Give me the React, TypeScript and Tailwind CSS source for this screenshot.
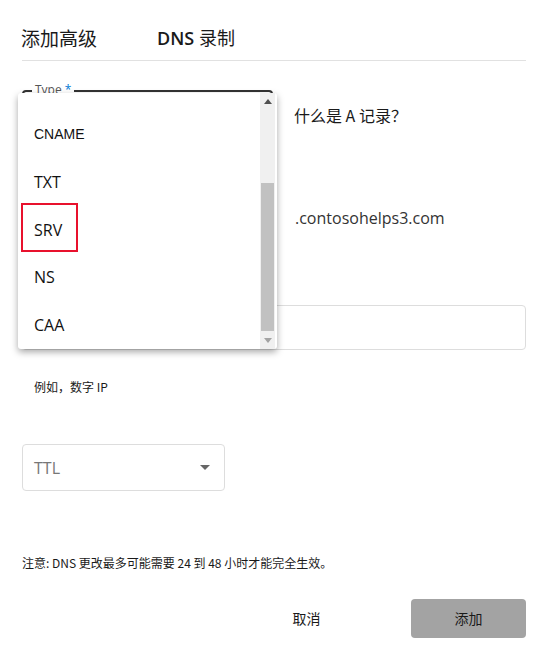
const items = ["CNAME", "TXT", "SRV", "NS", "CAA"];

const Arrow = ({ up, color }: { up?: boolean; color: string }) => (
  <svg width="8" height="5" viewBox="0 0 8 5">
    <path d={up ? "M0 5 L4 0 L8 5 Z" : "M0 0 L4 5 L8 0 Z"} fill={color} />
  </svg>
);

const TypeMenu = () => (
  <div className="absolute left-[18px] top-[93px] w-[259px] h-[256px] bg-white rounded-[3px] shadow-[0_3px_7px_rgba(0,0,0,0.35)] flex z-10">
    <div className="flex-1 pt-[18px]">
      {items.map((item) => (
        <div key={item} className="relative h-[47.5px] flex items-center pl-[16px]">
          <span
            className={
              item === "CNAME"
                ? "text-[14px] text-[#111] font-['Liberation_Sans',sans-serif]"
                : "text-[16px] text-[#111]"
            }
          >
            {item}
          </span>
          {item === "SRV" && (
            <span className="absolute left-[3px] top-[-3px] w-[57px] h-[49px] border-2 border-[#e8112d]" />
          )}
        </div>
      ))}
    </div>
    <div className="w-[15px] mr-[2px] bg-[#f0f0f0] flex flex-col">
      <div className="h-[17px] flex items-center justify-center">
        <Arrow up color="#505050" />
      </div>
      <div className="flex-1 px-[1px]">
        <div className="mt-[73px] h-[148px] bg-[#c1c1c1]" />
      </div>
      <div className="h-[17px] flex items-center justify-center">
        <Arrow color="#a3a3a3" />
      </div>
    </div>
  </div>
);

export default function App() {
  return (
    <div className="relative w-[548px] h-[663px] bg-white px-[22px] font-['Open_Sans','Noto_Sans_CJK_SC',sans-serif] text-[#1a1a1a]">
      <div className="flex items-end h-[61px] pb-[10px] border-b border-[#e1e1e1]">
        <span className="text-[19px] leading-[24px] font-['Noto_Sans_CJK_SC',sans-serif] -ml-[1px]">添加高级</span>
        <span className="ml-[60px] text-[18px] leading-[24px]">
          <span className="font-semibold">DNS</span>{" "}
          <span className="font-['Noto_Sans_CJK_SC',sans-serif]">录制</span>
        </span>
      </div>

      <div className="mt-[29px] grid grid-cols-[251px_1fr] gap-x-[21px]">
        <div className="relative h-[46px] border-2 border-[#333] rounded-[4px]">
          <span className="absolute left-[8px] top-[-9px] bg-white px-[3px] text-[12px] leading-[14px] text-[#555]">
            Type <span className="text-[#0078d4]">*</span>
          </span>
        </div>
        <div className="pt-[14px] text-[16px] leading-[22px] font-['Noto_Sans_CJK_SC',sans-serif]">
          什么是 A 记录？
        </div>
      </div>

      <div className="mt-[59px] grid grid-cols-[251px_1fr] gap-x-[22px] items-center">
        <div className="h-[46px] border border-[#ddd] rounded-[4px]" />
        <div className="text-[16px] text-[#333]">.contosohelps3.com</div>
      </div>

      <div className="mt-[64px] h-[45px] border border-[#ddd] rounded-[4px]" />

      <div className="mt-[29px] pl-[12px] text-[12px] leading-[16px] font-['Noto_Sans_CJK_SC',sans-serif]">
        例如，数字 IP
      </div>

      <div className="mt-[49px] w-[203px] h-[47px] border border-[#ddd] rounded-[4px] flex items-center justify-between pl-[11px] pr-[14px]">
        <span className="text-[16px] text-[#777]">TTL</span>
        <svg width="10" height="5" viewBox="0 0 10 5">
          <path d="M0 0 L5 5 L10 0 Z" fill="#666" />
        </svg>
      </div>

      <div className="mt-[64px] text-[12px] leading-[16px] font-['Noto_Sans_CJK_SC',sans-serif]">
        注意: DNS 更改最多可能需要 24 到 48 小时才能完全生效。
      </div>

      <div className="mt-[28px] flex justify-end gap-[47px]">
        <button className="w-[115px] h-[39px] text-[14px] font-['Noto_Sans_CJK_SC',sans-serif]">取消</button>
        <button className="w-[115px] h-[39px] rounded-[4px] bg-[#a3a3a3] text-[14px] font-['Noto_Sans_CJK_SC',sans-serif]">
          添加
        </button>
      </div>

      <TypeMenu />
    </div>
  );
}
